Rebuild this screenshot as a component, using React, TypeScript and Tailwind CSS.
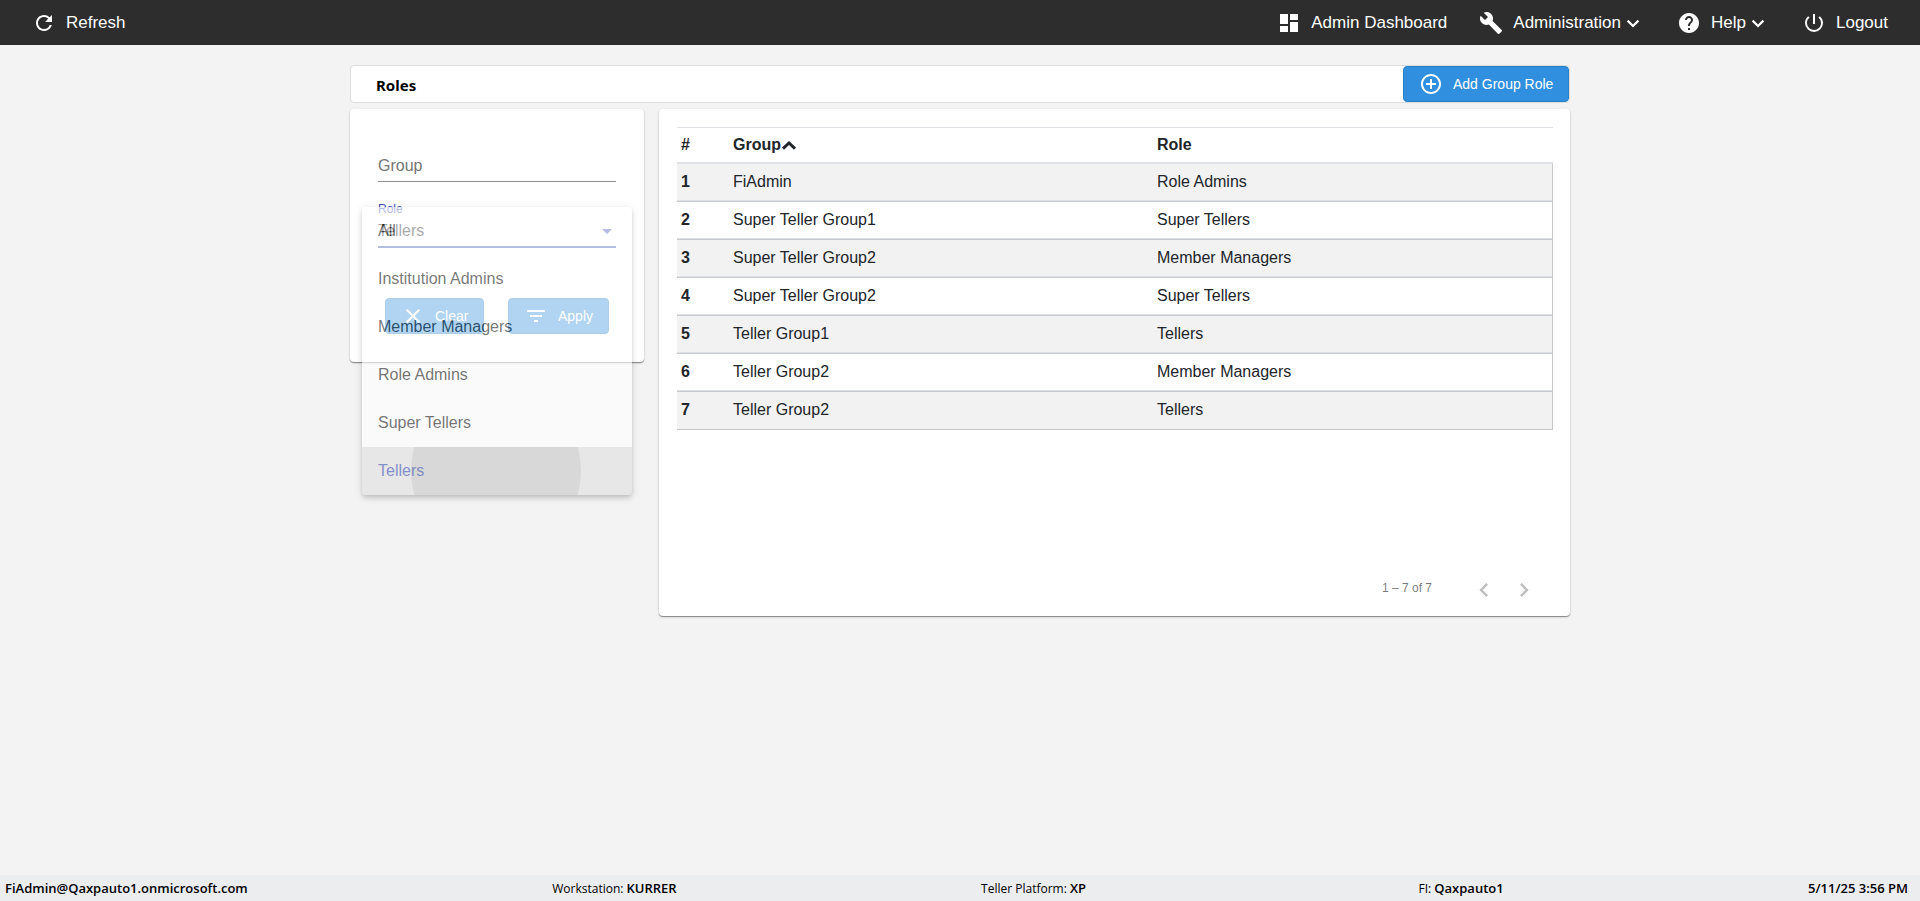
import { useState } from "react";
import {
  MdAddCircleOutline,
  MdArrowDropDown,
  MdChevronLeft,
  MdChevronRight,
  MdClose,
  MdDashboard,
  MdFilterList,
  MdHelp,
  MdPowerSettingsNew,
  MdRefresh,
} from "react-icons/md";

const roleOptions = ["All", "Institution Admins", "Member Managers", "Role Admins", "Super Tellers", "Tellers"];

const groupRoles = [
  { group: "FiAdmin", role: "Role Admins" },
  { group: "Super Teller Group1", role: "Super Tellers" },
  { group: "Super Teller Group2", role: "Member Managers" },
  { group: "Super Teller Group2", role: "Super Tellers" },
  { group: "Teller Group1", role: "Tellers" },
  { group: "Teller Group2", role: "Member Managers" },
  { group: "Teller Group2", role: "Tellers" },
];

const actionButton =
  "flex h-9 items-center rounded border border-[#2a7fc6] bg-[#308fde] text-sm text-white";

const WrenchIcon = () => (
  <svg viewBox="0 0 24 24" fill="currentColor" className="mr-2.5 size-6">
    <path d="M22.7 19l-9.1-9.1c.9-2.3.4-5-1.5-6.9-2-2-5-2.4-7.4-1.3L9 6 6 9 1.6 4.7C.4 7.1.9 10.1 2.9 12.1c1.9 1.9 4.6 2.4 6.9 1.5l9.1 9.1c.4.4 1 .4 1.4 0l2.3-2.3c.5-.4.5-1.1.1-1.4z" />
  </svg>
);

const MenuArrow = () => (
  <svg viewBox="0 0 24 24" fill="none" stroke="currentColor" strokeWidth="2.2" className="size-6">
    <path d="M6.6 9.6l5.4 5.4 5.4-5.4" />
  </svg>
);

const SortArrow = () => (
  <svg viewBox="0 0 16 16" fill="none" stroke="currentColor" strokeWidth="3" className="size-4">
    <path d="M2 11.7l6-5.7 6 5.7" />
  </svg>
);

const TopBar = () => (
  <header className="flex h-[45px] items-center justify-between bg-[#2d2d2d] px-8 text-[17px] text-white">
    <button className="flex items-center gap-2.5">
      <MdRefresh className="size-6" /> Refresh
    </button>
    <nav className="flex items-center gap-8">
      <button className="flex items-center gap-2.5">
        <MdDashboard className="size-6" /> Admin Dashboard
      </button>
      <button className="flex items-center">
        <WrenchIcon /> Administration
        <MenuArrow />
      </button>
      <button className="flex items-center">
        <MdHelp className="mr-2.5 size-6" /> Help
        <MenuArrow />
      </button>
      <button className="flex items-center gap-2.5">
        <MdPowerSettingsNew className="size-6" /> Logout
      </button>
    </nav>
  </header>
);

const FilterCard = () => {
  const [group, setGroup] = useState("");
  const [role, setRole] = useState("Tellers");

  return (
    <section className="relative h-[253px] w-[294px] shrink-0 rounded bg-white px-7 pt-10 shadow-[0_1px_1px_rgba(0,0,0,0.4),0_1px_3px_rgba(0,0,0,0.12)]">
      <input
        aria-label="Group"
        placeholder="Group"
        className="block h-[33px] w-full border-b border-[#8f8f8f] pt-0.5 placeholder:text-[#757575] focus:outline-none"
        value={group}
        onChange={(e) => setGroup(e.target.value)}
      />

      <label htmlFor="role" className="mt-[19px] block text-xs leading-4 text-[#3f51b5]">
        Role
      </label>
      <div className="relative border-b-2 border-[#3f51b5]">
        <select
          id="role"
          className="block h-[29px] w-full appearance-none pb-0.5 text-[#212121] focus:outline-none"
          value={role}
          onChange={(e) => setRole(e.target.value)}
        >
          {roleOptions.map((option) => (
            <option key={option}>{option}</option>
          ))}
        </select>
        <MdArrowDropDown className="pointer-events-none absolute top-0.5 -right-[3px] size-6 text-[#3f51b5]" />
      </div>

      <div className="mt-[50px] flex justify-between px-[7px]">
        <button className={`${actionButton} w-[99px] gap-2.5 pl-[15px]`}>
          <MdClose className="size-6" /> Clear
        </button>
        <button className={`${actionButton} w-[101px] gap-2.5 pl-[15px]`}>
          <MdFilterList className="size-6" /> Apply
        </button>
      </div>

      {/* ROLE OPTIONS PANEL, FADING OUT */}
      <ul
        role="listbox"
        aria-label="Role"
        className="absolute top-[98px] left-3 w-[270px] overflow-hidden rounded bg-white opacity-[0.62] shadow-[0_2px_4px_-1px_rgba(0,0,0,0.2),0_4px_5px_rgba(0,0,0,0.14),0_1px_10px_rgba(0,0,0,0.12)]"
      >
        {roleOptions.map((option) => (
          <li
            key={option}
            role="option"
            aria-selected={option === role}
            className="relative h-12 cursor-pointer overflow-hidden px-4 leading-[48px] text-black/87 aria-selected:bg-black/12 aria-selected:text-[#3f51b5]"
            onClick={() => setRole(option)}
          >
            {option}
            {option === role && (
              <span className="absolute top-1/2 left-[134px] size-[170px] -translate-1/2 rounded-full bg-black/10" />
            )}
          </li>
        ))}
      </ul>
    </section>
  );
};

const RolesTable = () => (
  <section className="flex h-[507px] flex-1 flex-col justify-between rounded bg-white pt-[18px] pr-[17px] pb-1.5 pl-[18px] shadow-[0_1px_1px_rgba(0,0,0,0.4),0_1px_3px_rgba(0,0,0,0.12)]">
    <table className="w-full border-separate border-spacing-0 text-left leading-6 text-[#212529]">
      <thead>
        <tr className="h-[37px] *:border-t *:border-b-2 *:border-[#dee2e6] *:px-1">
          <th className="w-[52px]">#</th>
          <th className="w-[424px]">
            <button className="flex items-center">
              Group
              <SortArrow />
            </button>
          </th>
          <th>Role</th>
        </tr>
      </thead>
      <tbody>
        {groupRoles.map((item, index) => (
          <tr
            key={index}
            className="h-[38px] odd:bg-[#f2f2f2] *:border-b *:border-[#c6c9cc] *:px-1 *:pb-0.5 *:shadow-[inset_0_-1px_#dee2e6] last:*:shadow-none"
          >
            <th>{index + 1}</th>
            <td>{item.group}</td>
            <td className="border-r">{item.role}</td>
          </tr>
        ))}
      </tbody>
    </table>

    <div className="flex items-center justify-end pr-[9px] text-xs text-black/54">
      <span className="mr-8 pb-1">1 – 7 of 7</span>
      <button aria-label="Previous page" className="flex size-10 items-center justify-center text-black/26">
        <MdChevronLeft className="size-7" />
      </button>
      <button aria-label="Next page" className="flex size-10 items-center justify-center text-black/26">
        <MdChevronRight className="size-7" />
      </button>
    </div>
  </section>
);

const StatusBar = () => (
  <footer className="flex h-[26px] items-center justify-between bg-[#ecedef] pt-0.5 pr-3 pl-[5px] font-['Open_Sans','Noto_Sans',sans-serif] text-xs text-black [&_b]:text-[13px] [&_b]:font-semibold">
    <b>FiAdmin@Qaxpauto1.onmicrosoft.com</b>
    <span>
      Workstation: <b>KURRER</b>
    </span>
    <span>
      Teller Platform: <b>XP</b>
    </span>
    <span className="pl-7">
      FI: <b>Qaxpauto1</b>
    </span>
    <b>5/11/25 3:56 PM</b>
  </footer>
);

const App = () => (
  <div className="flex min-h-screen flex-col bg-[#f3f3f3] font-['Liberation_Sans',Arial,sans-serif] text-base">
    <TopBar />
    <main className="mx-auto mt-5 w-full max-w-[1220px] flex-1">
      {/* TITLE BAR */}
      <div className="mb-1.5 flex h-[38px] items-start justify-between rounded border border-[#dedede] bg-white pl-[25px]">
        <h1 className="self-end font-['Noto_Sans',sans-serif] text-[15px] leading-[34px] font-bold text-black">Roles</h1>
        <button className={`${actionButton} w-[166px] gap-2.5 pl-[15px]`}>
          <MdAddCircleOutline className="size-6" /> Add Group Role
        </button>
      </div>

      <div className="flex items-start gap-[15px]">
        <FilterCard />
        <RolesTable />
      </div>
    </main>
    <StatusBar />
  </div>
);

export default App;
